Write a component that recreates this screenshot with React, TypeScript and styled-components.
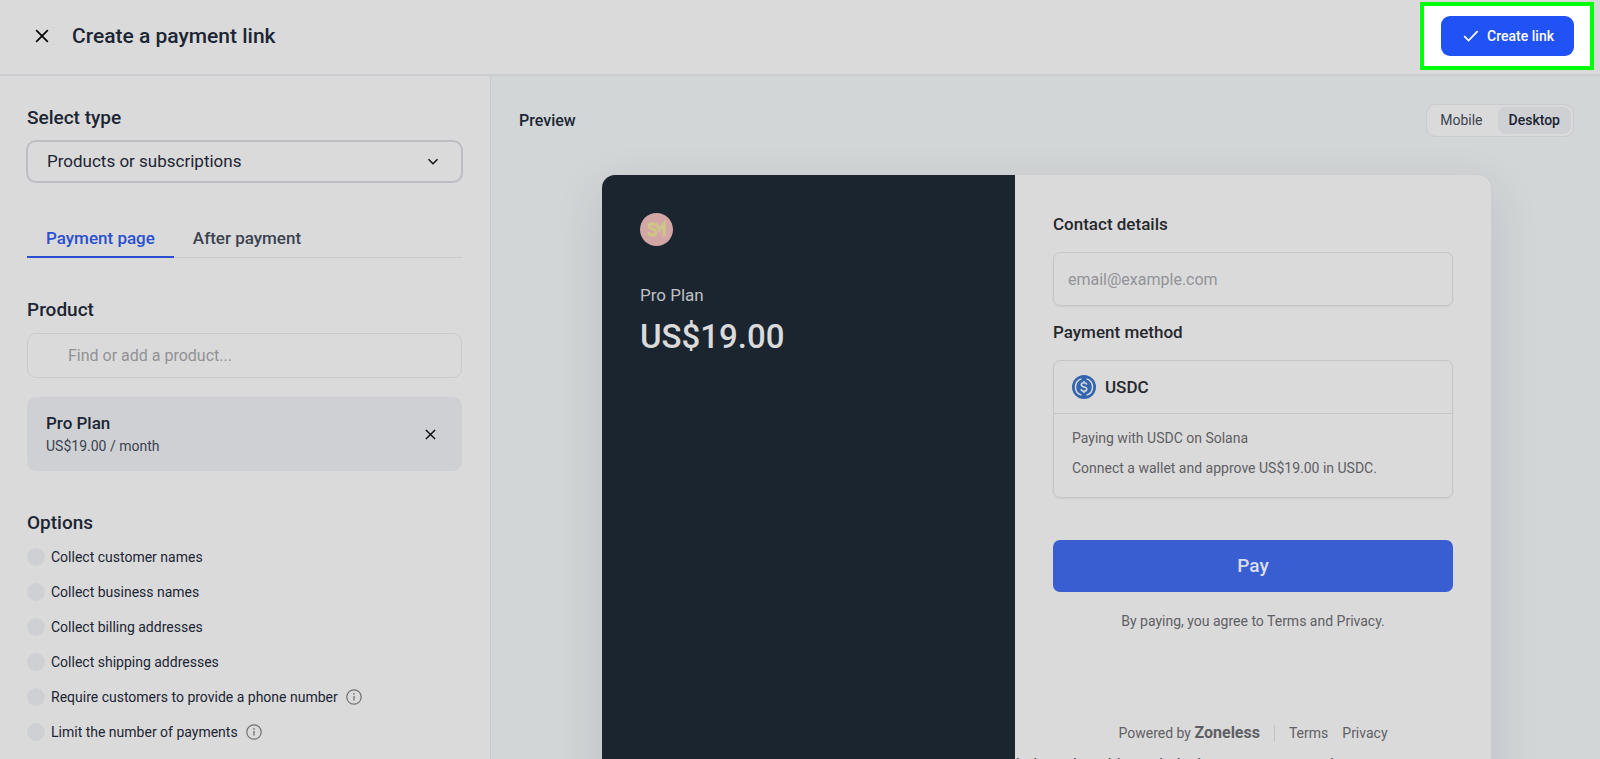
import React, { useState } from 'react';
import styled, { createGlobalStyle, css } from 'styled-components';

const ink = '#1c2533';
const surface = '#dadada';
const line = '#c8cacd';
const muted = '#5f6064';
const tint = '#cfd0d4';

const GlobalStyle = createGlobalStyle`
  *, *::before, *::after { box-sizing: border-box; }
  html, body { margin: 0; }
  body {
    background: ${surface};
    color: ${ink};
    font-family: Roboto, "Liberation Sans", sans-serif;
    font-size: 14px;
    line-height: 20px;
  }
  button, input, select { font: inherit; color: inherit; }
  h1, h2, h3, p { margin: 0; }
`;

const Shell = styled.div`
  display: flex;
  flex-direction: column;
  height: 100vh;
  overflow: hidden;
`;

const Header = styled.header`
  display: flex;
  align-items: center;
  justify-content: space-between;
  flex: none;
  padding: 2px 6px 4px 32px;
  border-bottom: 2px solid #cbccd1;
`;

const HeaderTitle = styled.div`
  display: flex;
  align-items: center;
  gap: 20px;
`;

const Title = styled.h1`
  font-size: 21px;
  line-height: 28px;
  font-weight: 500;
`;

const IconButton = styled.button`
  display: grid;
  place-items: center;
  width: 20px;
  height: 20px;
  padding: 0;
  border: 0;
  background: none;
  color: #060709;
  cursor: pointer;
`;

const Spotlight = styled.div`
  padding: 10px 16px 10px 17px;
  border: 4px solid #00ff0a;
  background: #ffffff;
`;

const CreateButton = styled.button`
  display: flex;
  align-items: center;
  gap: 8px;
  height: 40px;
  padding: 0 20px 0 22px;
  border: 0;
  border-radius: 9px;
  background: #2152f5;
  color: #ffffff;
  font-weight: 500;
  cursor: pointer;
`;

const Body = styled.main`
  display: grid;
  grid-template-columns: minmax(360px, 491fr) 1109fr;
  flex: 1;
  min-height: 0;
`;

const Sidebar = styled.aside`
  display: flex;
  flex-direction: column;
  padding: 29px 28px 20px 27px;
  border-right: 1px solid ${line};
  min-height: 0;
  overflow: hidden;
`;

const SectionTitle = styled.h2`
  font-size: 19px;
  line-height: 26px;
  font-weight: 500;
`;

const Field = styled.div`
  display: flex;
  flex-direction: column;
  gap: 9px;
`;

const SelectBox = styled.div`
  display: grid;
  align-items: center;
  margin: 0 -1px;

  > * { grid-area: 1 / 1; }
  > svg { justify-self: end; margin-right: 23px; pointer-events: none; }
`;

const Select = styled.select`
  width: 100%;
  height: 43px;
  padding: 0 44px 2px 19px;
  appearance: none;
  border: 2px solid #bdbec4;
  border-radius: 10px;
  background: transparent;
  font-size: 17px;
`;

const Tabs = styled.div`
  display: flex;
  margin-top: 40px;
  box-shadow: inset 0 -1px 0 ${line};
`;

const Tab = styled.button<{ $active?: boolean }>`
  padding: 3px 19px 6px;
  border: 0;
  border-bottom: 2px solid ${p => (p.$active ? '#2a50cf' : 'transparent')};
  background: none;
  color: ${p => (p.$active ? '#2a50cf' : '#3c4350')};
  font-size: 17px;
  line-height: 24px;
  font-weight: 500;
  cursor: pointer;
`;

const ProductField = styled(Field)`
  margin-top: 39px;
  gap: 10px;
`;

const ProductInput = styled.input`
  width: 100%;
  height: 45px;
  padding: 0 16px 0 40px;
  border: 1px solid ${line};
  border-radius: 9px;
  background: transparent;
  font-size: 16px;
  &::placeholder { color: #919296; opacity: 1; }
`;

const ProductCard = styled.div`
  display: flex;
  align-items: center;
  justify-content: space-between;
  flex: none;
  height: 74px;
  margin-top: 19px;
  padding: 0 22px 0 19px;
  border-radius: 9px;
  background: ${tint};
`;

const ProductName = styled.h3`
  font-size: 17px;
  line-height: 24px;
  font-weight: 500;
`;

const ProductPrice = styled.p`
  line-height: 22px;
  color: #3a4250;
`;

const Options = styled.section`
  margin-top: 39px;
`;

const OptionList = styled.ul`
  display: flex;
  flex-direction: column;
  gap: 15px;
  margin: 11px 0 0;
  padding: 0;
  list-style: none;
`;

const OptionRow = styled.li`
  display: flex;
  align-items: center;
  gap: 8px;
  white-space: nowrap;
`;

const OptionLabel = styled.label`
  display: flex;
  align-items: center;
  gap: 6px;
`;

const Check = styled.input`
  width: 18px;
  height: 18px;
  margin: 0;
  appearance: none;
  border-radius: 50%;
  background: ${tint};
  &:checked { background: #2a50cf; }
`;

const PreviewArea = styled.section`
  display: flex;
  flex-direction: column;
  min-height: 0;
  overflow: hidden;
  padding: 28px 26px 0 28px;
  background: #d2d6d7;
`;

const PreviewBar = styled.div`
  display: flex;
  align-items: center;
  justify-content: space-between;
  flex: none;
`;

const PreviewTitle = styled.h2`
  font-size: 16px;
  line-height: 24px;
  font-weight: 500;
`;

const Segmented = styled.div`
  display: flex;
  height: 33px;
  padding: 2px;
  border: 1px solid #cacbd0;
  border-radius: 10px;
  background: ${surface};
`;

const Segment = styled.button<{ $active?: boolean }>`
  padding: 0 11px 1px;
  border: 0;
  border-radius: 8px;
  background: none;
  color: #3c4350;
  cursor: pointer;
  &:first-child { padding-right: 15px; }
  ${p => p.$active && css`
    background: ${tint};
    color: ${ink};
    font-weight: 500;
  `}
`;

const Checkout = styled.article`
  display: grid;
  grid-template-columns: 413fr 476fr;
  flex: none;
  margin: 38px 83px 0;
  border-radius: 13px;
  background: ${surface};
  box-shadow: 0 0 0 1px #cccdd0, 0 16px 48px rgba(60, 50, 70, 0.14);
  overflow: hidden;
`;

const Summary = styled.section`
  padding: 38px;
  background: #1b2530;
`;

const Avatar = styled.svg`
  display: block;
  width: 33px;
  height: 33px;
`;

const SummaryName = styled.p`
  margin-top: 37px;
  font-size: 17px;
  line-height: 24px;
  color: #bfc1c4;
`;

const SummaryPrice = styled.p`
  margin-top: 10px;
  font-size: 33px;
  line-height: 40px;
  font-weight: 500;
  color: #dadada;
`;

const PayPanel = styled.section`
  display: flex;
  flex-direction: column;
`;

const PayForm = styled.form`
  display: flex;
  flex-direction: column;
  padding: 37px 38px 0;
`;

const FormTitle = styled.label`
  font-size: 17px;
  line-height: 24px;
  font-weight: 500;
  color: #26282d;
`;

const MethodTitle = styled(FormTitle).attrs({ as: 'h3' })`
  margin-top: 14px;
`;

const boxed = css`
  margin-top: 16px;
  border: 1px solid #c5c6c8;
  border-radius: 7px;
  box-shadow: 0 1px 2px rgba(0, 0, 0, 0.06);
`;

const EmailInput = styled.input`
  ${boxed}
  width: 100%;
  height: 54px;
  padding: 0 14px;
  background: transparent;
  font-size: 16px;
  &::placeholder { color: #929398; opacity: 1; }
`;

const Method = styled.div`
  ${boxed}
`;

const MethodHead = styled.div`
  display: flex;
  align-items: center;
  gap: 9px;
  height: 53px;
  padding: 0 19px 1px 18px;
  border-bottom: 1px solid #c5c6c8;
  color: #26282d;
  font-size: 17px;
  font-weight: 500;
`;

const MethodBody = styled.div`
  display: flex;
  flex-direction: column;
  gap: 10px;
  padding: 14px 18px 19px;
  color: ${muted};
`;

const PayButton = styled.button`
  height: 52px;
  margin-top: 42px;
  border: 0;
  border-radius: 7px;
  background: #395ed2;
  color: #dadff0;
  font-size: 19px;
  font-weight: 500;
  cursor: pointer;
`;

const Terms = styled.p`
  margin-top: 19px;
  text-align: center;
  color: ${muted};
`;

const Footer = styled.footer`
  display: flex;
  align-items: center;
  justify-content: center;
  gap: 14px;
  margin-top: 91px;
  line-height: 22px;
  color: ${muted};
`;

const Brand = styled.strong`
  font-size: 16px;
  font-weight: 700;
`;

const Divider = styled.span`
  width: 1px;
  height: 17px;
  background: #c2c3c6;
`;

const FooterLink = styled.a`
  color: inherit;
  text-decoration: none;
`;

const Note = styled.p`
  margin: 9px 0 24px 1px;
  font-size: 16px;
  line-height: 24px;
  white-space: nowrap;
  color: #3c4350;
`;

const CrossIcon = ({ size }: { size: number }) => (
  <svg width={size} height={size} viewBox="0 0 12 12" fill="none" stroke="currentColor" strokeWidth={size > 12 ? 1.5 : 1.5} aria-hidden="true">
    <path d="M1 1l10 10M11 1L1 11" />
  </svg>
);

const CheckIcon = () => (
  <svg width="16" height="12" viewBox="0 0 16 12" fill="none" stroke="currentColor" strokeWidth="1.7" aria-hidden="true">
    <path d="M1.2 6.2l4.4 4.4L14.6 1.2" />
  </svg>
);

const ChevronIcon = () => (
  <svg width="14" height="14" viewBox="0 0 14 14" fill="none" stroke="#111318" strokeWidth="1.5" aria-hidden="true">
    <path d="M2.500 4.300L7 8.700l4.500-4.400" />
  </svg>
);

const InfoIcon = () => (
  <svg width="16" height="16" viewBox="0 0 16 16" fill="none" aria-hidden="true">
    <circle cx="8" cy="8" r="7.2" stroke="#6f7073" strokeWidth="1.2" />
    <path d="M8 7v4.6" stroke="#6f7073" strokeWidth="1.3" />
    <circle cx="8" cy="4.9" r="0.8" fill="#6f7073" />
  </svg>
);

const UsdcIcon = () => (
  <svg width="24" height="24" viewBox="0 0 24 24" fill="none" aria-hidden="true">
    <circle cx="12" cy="12" r="12" fill="#3565ad" />
    <g stroke="#d6dce6" strokeWidth="1.5">
      <path d="M9.4 3.9a8.5 8.5 0 0 0 0 16.2M14.6 3.9a8.5 8.5 0 0 1 0 16.2" />
      <path d="M14.7 9.7c-.2-1.2-1.2-1.9-2.7-1.9-1.6 0-2.7.8-2.7 2 0 3.1 5.5 1.3 5.5 4.3 0 1.3-1.1 2.1-2.8 2.1s-2.8-.8-2.9-2.1M12 6v1.8M12 16.2V18" />
    </g>
  </svg>
);

const options = [
  { label: 'Collect customer names' },
  { label: 'Collect business names' },
  { label: 'Collect billing addresses' },
  { label: 'Collect shipping addresses' },
  { label: 'Require customers to provide a phone number', info: true },
  { label: 'Limit the number of payments', info: true },
];

export default function App() {
  const [tab, setTab] = useState('Payment page');
  const [device, setDevice] = useState('Desktop');

  return (
    <>
      <GlobalStyle />
      <Shell>
        <Header>
          <HeaderTitle>
            <IconButton aria-label="Close"><CrossIcon size={14} /></IconButton>
            <Title>Create a payment link</Title>
          </HeaderTitle>
          <Spotlight>
            <CreateButton><CheckIcon />Create link</CreateButton>
          </Spotlight>
        </Header>
        <Body>
          <Sidebar>
            <Field>
              <SectionTitle as="label" htmlFor="type">Select type</SectionTitle>
              <SelectBox>
                <Select id="type"><option>Products or subscriptions</option></Select>
                <ChevronIcon />
              </SelectBox>
            </Field>
            <Tabs role="tablist">
              {['Payment page', 'After payment'].map(name => (
                <Tab key={name} role="tab" aria-selected={tab === name} $active={tab === name} onClick={() => setTab(name)}>
                  {name}
                </Tab>
              ))}
            </Tabs>
            <ProductField>
              <SectionTitle as="label" htmlFor="product">Product</SectionTitle>
              <ProductInput id="product" placeholder="Find or add a product..." />
            </ProductField>
            <ProductCard>
              <div>
                <ProductName>Pro Plan</ProductName>
                <ProductPrice>US$19.00 / month</ProductPrice>
              </div>
              <IconButton aria-label="Remove Pro Plan"><CrossIcon size={11} /></IconButton>
            </ProductCard>
            <Options>
              <SectionTitle>Options</SectionTitle>
              <OptionList>
                {options.map(option => (
                  <OptionRow key={option.label}>
                    <OptionLabel><Check type="checkbox" />{option.label}</OptionLabel>
                    {option.info && <InfoIcon />}
                  </OptionRow>
                ))}
              </OptionList>
            </Options>
          </Sidebar>
          <PreviewArea>
            <PreviewBar>
              <PreviewTitle>Preview</PreviewTitle>
              <Segmented>
                {['Mobile', 'Desktop'].map(name => (
                  <Segment key={name} $active={device === name} aria-pressed={device === name} onClick={() => setDevice(name)}>
                    {name}
                  </Segment>
                ))}
              </Segmented>
            </PreviewBar>
            <Checkout>
              <Summary>
                <Avatar viewBox="0 0 33 33" role="img" aria-label="Store logo">
                  <circle cx="16.5" cy="16.5" r="16.5" fill="#d2a6a5" />
                  <g fill="none" stroke="#d0c587" strokeWidth="3">
                    <path d="M15.4 13c-.4-1.500-1.600-2.200-3.200-2.200-1.900 0-3.100.9-3.100 2.400 0 3.700 6.900 1.600 6.900 6 0 1.700-1.400 2.900-3.600 2.900-2.200 0-3.500-1.100-3.700-2.900" />
                    <path d="M15.400 10.200l4.400 6.600 4.400-6.300v12.800" />
                  </g>
                </Avatar>
                <SummaryName>Pro Plan</SummaryName>
                <SummaryPrice>US$19.00</SummaryPrice>
              </Summary>
              <PayPanel>
                <PayForm onSubmit={e => e.preventDefault()}>
                  <FormTitle htmlFor="email">Contact details</FormTitle>
                  <EmailInput id="email" type="email" placeholder="email@example.com" />
                  <MethodTitle>Payment method</MethodTitle>
                  <Method>
                    <MethodHead><UsdcIcon />USDC</MethodHead>
                    <MethodBody>
                      <p>Paying with USDC on Solana</p>
                      <p>Connect a wallet and approve US$19.00 in USDC.</p>
                    </MethodBody>
                  </Method>
                  <PayButton type="submit">Pay</PayButton>
                  <Terms>By paying, you agree to Terms and Privacy.</Terms>
                </PayForm>
                <Footer>
                  <span>Powered by <Brand>Zoneless</Brand></span>
                  <Divider />
                  <FooterLink href="#terms">Terms</FooterLink>
                  <FooterLink href="#privacy">Privacy</FooterLink>
                </Footer>
                <Note>help and on this work design or account settings</Note>
              </PayPanel>
            </Checkout>
          </PreviewArea>
        </Body>
      </Shell>
    </>
  );
}
